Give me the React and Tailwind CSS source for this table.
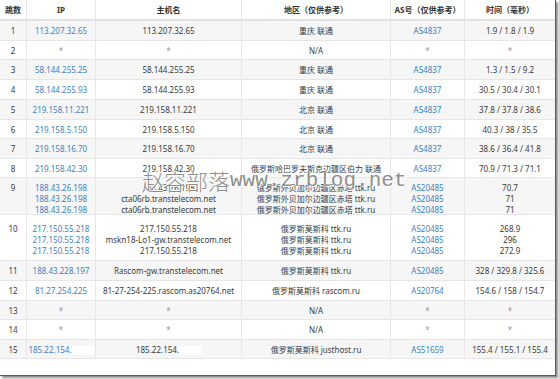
const cols = "grid grid-cols-[27px_69px_146px_149px_74px_90px]";

const rows = [
  { hop: "1", ip: ["113.207.32.65"], host: ["113.207.32.65"], geo: ["重庆 联通"], as: ["AS4837"], time: ["1.9 / 1.8 / 1.9"], h: 21 },
  { hop: "2", ip: ["*"], host: ["*"], geo: ["N/A"], as: ["*"], time: ["*"], h: 20 },
  { hop: "3", ip: ["58.144.255.25"], host: ["58.144.255.25"], geo: ["重庆 联通"], as: ["AS4837"], time: ["1.3 / 1.5 / 9.2"], h: 21 },
  { hop: "4", ip: ["58.144.255.93"], host: ["58.144.255.93"], geo: ["重庆 联通"], as: ["AS4837"], time: ["30.5 / 30.4 / 30.1"], h: 21 },
  { hop: "5", ip: ["219.158.11.221"], host: ["219.158.11.221"], geo: ["北京 联通"], as: ["AS4837"], time: ["37.8 / 37.8 / 38.6"], h: 21 },
  { hop: "6", ip: ["219.158.5.150"], host: ["219.158.5.150"], geo: ["北京 联通"], as: ["AS4837"], time: ["40.3 / 38 / 35.5"], h: 20 },
  { hop: "7", ip: ["219.158.16.70"], host: ["219.158.16.70"], geo: ["北京 联通"], as: ["AS4837"], time: ["38.6 / 36.4 / 41.8"], h: 21 },
  { hop: "8", ip: ["219.158.42.30"], host: ["219.158.42.30"], geo: ["俄罗斯哈巴罗夫斯克边疆区伯力 联通"], as: ["AS4837"], time: ["70.9 / 71.3 / 71.1"], h: 20 },
  {
    hop: "9",
    ip: ["188.43.26.198", "188.43.26.198", "188.43.26.198"],
    host: ["188.43.26.198", "cta06rb.transtelecom.net", "cta06rb.transtelecom.net"],
    geo: ["俄罗斯外贝加尔边疆区赤塔 ttk.ru", "俄罗斯外贝加尔边疆区赤塔 ttk.ru", "俄罗斯外贝加尔边疆区赤塔 ttk.ru"],
    as: ["AS20485", "AS20485", "AS20485"],
    time: ["70.7", "71", "71"],
    h: 38,
    pt: "pt-[4px]",
  },
  {
    hop: "10",
    ip: ["217.150.55.218", "217.150.55.218", "217.150.55.218"],
    host: ["217.150.55.218", "mskn18-Lo1-gw.transtelecom.net", "217.150.55.218"],
    geo: ["俄罗斯莫斯科 ttk.ru", "俄罗斯莫斯科 ttk.ru", "俄罗斯莫斯科 ttk.ru"],
    as: ["AS20485", "AS20485", "AS20485"],
    time: ["268.9", "296", "272.9"],
    h: 47,
    pt: "pt-[8px]",
  },
  { hop: "11", ip: ["188.43.228.197"], host: ["Rascom-gw.transtelecom.net"], geo: ["俄罗斯莫斯科 ttk.ru"], as: ["AS20485"], time: ["328 / 329.8 / 325.6"], h: 21 },
  { hop: "12", ip: ["81.27.254.225"], host: ["81-27-254-225.rascom.as20764.net"], geo: ["俄罗斯莫斯科 rascom.ru"], as: ["AS20764"], time: ["154.6 / 158 / 154.7"], h: 21 },
  { hop: "13", ip: ["*"], host: ["*"], geo: ["N/A"], as: ["*"], time: ["*"], h: 20 },
  { hop: "14", ip: ["*"], host: ["*"], geo: ["N/A"], as: ["*"], time: ["*"], h: 21 },
  { hop: "15", ip: ["185.22.154."], host: ["185.22.154."], geo: ["俄罗斯莫斯科 justhost.ru"], as: ["AS51659"], time: ["155.4 / 155.1 / 155.4"], h: 20, masked: true },
];

function Lines({ items, kind, masked }) {
  return items.map((t, i) => {
    const star = t === "*";
    const color = star ? "text-[#9a9a9a]" : kind === "link" ? "text-[#3f7fc0]" : "text-[#3a3a3a]";
    return (
      <div key={i} className={`h-[11px] leading-[11px] whitespace-nowrap ${color}`}>
        {t}
        {masked && <span className="inline-block w-[22px] h-[9px] bg-white align-middle" />}
      </div>
    );
  });
}

export default function App() {
  return (
    <div className="w-[559px] h-[379px] bg-white relative overflow-hidden">
      <div
        className="w-[556px] h-[376px] border-r border-b border-[#5a5a5a] shadow-[2px_2px_2px_rgba(0,0,0,0.45)] bg-white text-[8px]"
        style={{ fontFamily: '"Noto Sans", "Noto Sans CJK SC", sans-serif' }}
      >
        <div className={`${cols} h-[21px] bg-white border-b-2 border-[#e2e2e2] font-bold text-[#333]`}>
          {["跳数", "IP", "主机名", "地区（仅供参考）", "AS号（仅供参考）", "时间（毫秒）"].map((t, i) => (
            <div
              key={i}
              className={`flex items-center justify-center ${i < 5 ? "border-r border-[#e8e8e8]" : ""}`}
            >
              {t}
            </div>
          ))}
        </div>
        {rows.map((r, idx) => (
          <div
            key={r.hop}
            className={`${cols} border-b border-[#e6e6e6] ${idx % 2 === 0 ? "bg-[#f6f6f6]" : "bg-white"}`}
            style={{ height: r.h - 1 }}
          >
            <div className={`border-r border-[#e8e8e8] text-center ${r.pt || "pt-[4px]"}`}>
              <Lines items={[r.hop]} />
            </div>
            <div className={`border-r border-[#e8e8e8] text-center ${r.pt || "pt-[4px]"}`}>
              <Lines items={r.ip} kind="link" masked={r.masked} />
            </div>
            <div className={`border-r border-[#e8e8e8] text-center ${r.pt || "pt-[4px]"}`}>
              <Lines items={r.host} masked={r.masked} />
            </div>
            <div className={`border-r border-[#e8e8e8] text-center ${r.pt || "pt-[4px]"}`}>
              <Lines items={r.geo} />
            </div>
            <div className={`border-r border-[#e8e8e8] text-center ${r.pt || "pt-[4px]"}`}>
              <Lines items={r.as} kind="link" />
            </div>
            <div className={`text-center ${r.pt || "pt-[4px]"}`}>
              <Lines items={r.time} />
            </div>
          </div>
        ))}
      </div>
      <div
        className="absolute left-[142px] top-[168px] flex items-end whitespace-nowrap text-[#8e8e8e] pointer-events-none"
        style={{ textShadow: "0 0 1px #fff, 1px 1px 0 #fff, -1px -1px 0 #fff" }}
      >
        <span className="text-[22px] leading-[24px] font-light" style={{ fontFamily: '"Noto Sans CJK SC", sans-serif' }}>
          赵容部落
        </span>
        <span className="text-[21px] leading-[22px]" style={{ fontFamily: '"Liberation Mono", monospace' }}>
          www.zrblog.net
        </span>
      </div>
    </div>
  );
}
